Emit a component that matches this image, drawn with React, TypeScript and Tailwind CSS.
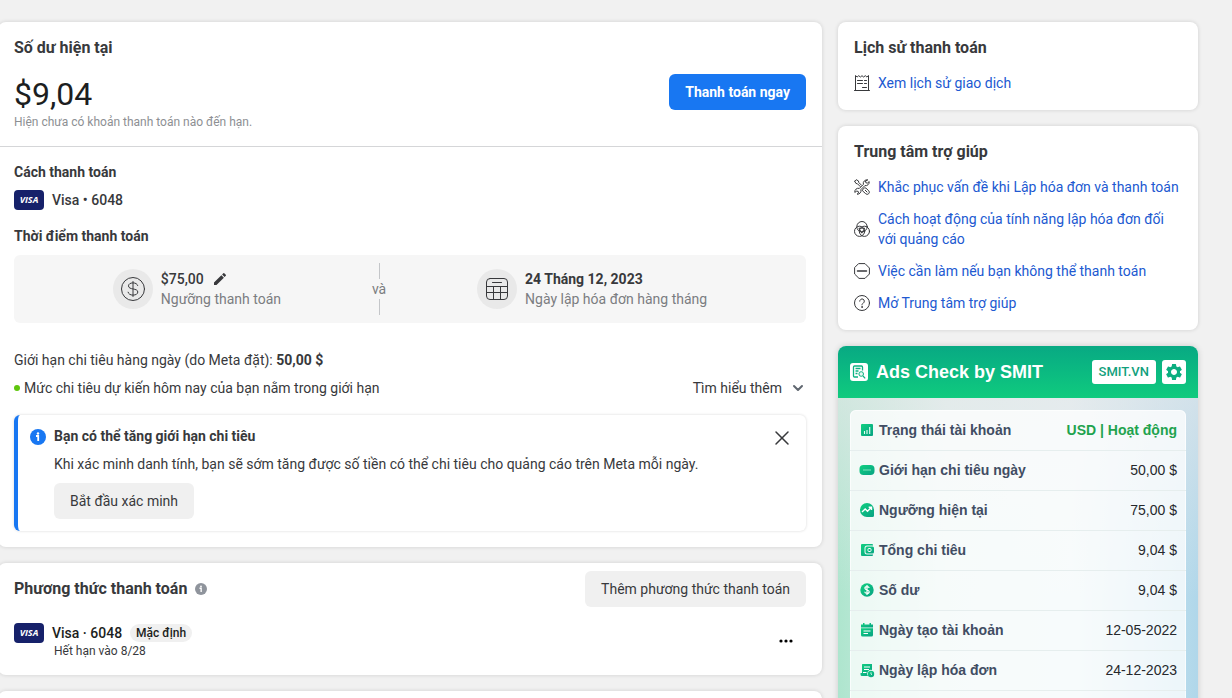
import type { ReactNode } from 'react';
import { ChevronDown, X } from 'lucide-react';
import { MdEdit, MdSettings } from 'react-icons/md';

const iconStroke = { fill: 'none', stroke: 'currentColor', strokeLinecap: 'round', strokeLinejoin: 'round' } as const;

function ReceiptIcon() {
  return (
    <svg viewBox="0 0 16 16" className="w-4 h-4 shrink-0" {...iconStroke}>
      <path d="M1.5 15.500V.5l1.6 1.500L4.700.7l1.700 1.300L8 .7 9.600 2l1.700-1.300L12.900 2 14.500.5v15M.5 15.500h15M3.500 5.500h5M3.500 8.500h5M10.500 5.500h2M10.500 8.500h2M8.500 12.500h4" />
    </svg>
  );
}

function ToolsIcon() {
  return (
    <svg viewBox="0 0 16 16" className="w-4 h-4 shrink-0" {...iconStroke}>
      <path d="M.7 2.200 2.200.7l2.200 1.200.4 1.600 2.700 2.700M.7 2.200l1.200 2.200 1.600.4 2.700 2.700" />
      <path d="M13.400.8a3.600 3.600 0 0 0-4 4.600L5.400 9.400a3.600 3.600 0 0 0-4.600 4l1.900-1.300 1.500.3.300 1.500-1.400 1.300a3.600 3.600 0 0 0 3.800-4.600l4-4a3.600 3.600 0 0 0 4.300-4l-1.800 1.500-1.500-.3-.3-1.500z" />
      <path d="M8.700 10.700 10.600 8.700l1.400.5 2.700 2.500a2.100 2.100 0 0 1-3 3l-3-2.700zM11.300 11.300l1.700 1.700" />
    </svg>
  );
}

function CirclesIcon() {
  return (
    <svg viewBox="0 0 16 16" className="w-4 h-4 shrink-0" {...iconStroke}>
      <circle cx="8" cy="5.700" r="5.200" />
      <circle cx="5.600" cy="10.300" r="5.100" />
      <circle cx="10.400" cy="10.300" r="5.100" />
      <path d="M5.300 7.200h5.400L8 11.800z" />
    </svg>
  );
}

function StopIcon() {
  return (
    <svg viewBox="0 0 16 16" className="w-4 h-4 shrink-0" {...iconStroke}>
      <path d="M5 .6h6L15.400 5v6L11 15.400H5L.6 11V5z" />
      <path d="M3.500 8h9" strokeWidth="1.500" />
    </svg>
  );
}

function QuestionIcon() {
  return (
    <svg viewBox="0 0 16 16" className="w-4 h-4 shrink-0" {...iconStroke}>
      <circle cx="8" cy="8" r="7.500" />
      <path d="M5.700 6.200a2.300 2.300 0 1 1 3.600 1.900C8.400 8.600 8 9 8 9.900" />
      <circle cx="8" cy="12" r=".4" fill="currentColor" />
    </svg>
  );
}

function DollarIcon() {
  return (
    <svg viewBox="0 0 24 24" className="w-6 h-6" {...iconStroke}>
      <circle cx="12" cy="12" r="11.500" />
      <path d="M12 4.500v15M16.700 8.500C16.300 7 14.500 5.900 12 5.900c-2.700 0-4.500 1.200-4.500 3 0 4.300 9.300 1.900 9.300 6.100 0 1.900-1.900 3.100-4.800 3.100-2.700 0-4.500-1.100-4.900-2.900" />
    </svg>
  );
}

function CalendarIcon() {
  return (
    <svg viewBox="0 0 24 24" className="w-6 h-6" {...iconStroke}>
      <rect x="1.500" y="1.500" width="21" height="21" rx="3.500" />
      <path d="M1.500 9.500h21M1.500 15.500h21M8.500 9.500v13M15.500 9.500v13M7.500 5.500h9" />
    </svg>
  );
}

function InfoIcon({ className }: { className: string }) {
  return (
    <svg viewBox="0 0 16 16" className={className}>
      <circle cx="8" cy="8" r="8" fill="currentColor" />
      <circle cx="8" cy="4.500" r="1.200" fill="#fff" />
      <path d="M6 7h2.200v5" fill="none" stroke="#fff" strokeWidth="1.800" />
    </svg>
  );
}

function VisaBadge() {
  return (
    <span className="w-[30px] h-5 shrink-0 rounded-sm bg-[#16216a] text-white text-[9px] leading-5 font-bold italic text-center font-['Open_Sans',sans-serif]">
      VISA
    </span>
  );
}

function Card({ className = '', children }: { className?: string; children?: ReactNode }) {
  return (
    <section className={`bg-white rounded-lg shadow-[0_0_4px_rgba(0,0,0,0.14)] ${className}`}>{children}</section>
  );
}

const helpLinks = [
  { icon: ToolsIcon, label: 'Khắc phục vấn đề khi Lập hóa đơn và thanh toán' },
  { icon: CirclesIcon, label: 'Cách hoạt động của tính năng lập hóa đơn đối với quảng cáo' },
  { icon: StopIcon, label: 'Việc cần làm nếu bạn không thể thanh toán' },
  { icon: QuestionIcon, label: 'Mở Trung tâm trợ giúp' },
];

function SideLink({ icon: Icon, label }: { icon: () => ReactNode; label: string }) {
  return (
    <li className="flex items-center gap-2">
      <Icon />
      <a href="#" className="text-[#2159d1]">{label}</a>
    </li>
  );
}

// 16x16 glyphs for the account table, filled with the shared green gradient
const statGlyphs: Record<string, ReactNode> = {
  status: (
    <>
      <rect x="2" y="2" width="12" height="12" rx="1" fill="url(#green)" />
      <path d="M5.500 9v3M8 8v4M10.700 5V12" stroke="#e8fff5" strokeWidth="1.100" />
    </>
  ),
  limit: (
    <>
      <rect x=".5" y="3" width="15" height="10" rx="4" fill="url(#green)" />
      <path d="M4 8h8" stroke="#7fe3bb" />
    </>
  ),
  threshold: (
    <>
      <path d="M8 1a7 7 0 1 0 0 14h5.500a1.500 1.500 0 0 0 1.500-1.500V8a7 7 0 0 0-7-7z" fill="url(#green)" />
      <path d="m3 10 3.200-3 2.300 2.200 3.700-3.700M9.700 5.300h2.800v2.800" fill="none" stroke="#fff" strokeWidth="1.400" />
    </>
  ),
  spend: (
    <>
      <path d="M3 2h10a1 1 0 0 1 1 1v.5H8A2.500 2.500 0 0 0 5.500 6v4A2.500 2.500 0 0 0 8 12.500h6v.500a1 1 0 0 1-1 1H3a1 1 0 0 1-1-1V3a1 1 0 0 1 1-1z" fill="url(#green)" />
      <rect x="6.500" y="4.500" width="8.500" height="7" rx="1.500" fill="url(#green)" />
      <rect x="9" y="6.500" width="3" height="3" rx=".8" fill="none" stroke="#fff" />
    </>
  ),
  balance: (
    <>
      <circle cx="8" cy="8" r="6.700" fill="url(#green)" />
      <path d="M8 3v10M10.200 6C10 5 9.200 4.600 8 4.600S5.900 5.200 5.900 6.200C5.900 8.400 10.200 7.500 10.200 9.700c0 1-.9 1.700-2.200 1.700s-2.200-.6-2.300-1.600" fill="none" stroke="#fff" strokeWidth="1.200" />
    </>
  ),
  created: (
    <>
      <path d="M4 1h1.500v1.500h5V1H12v1.500h2V5.500H2v-3h2z" fill="url(#green)" />
      <path d="M2 6.300h12V13a1.500 1.500 0 0 1-1.500 1.500h-9A1.500 1.500 0 0 1 2 13z" fill="url(#green)" />
      <path d="M4.500 9h7M4.500 11.500h4.500" stroke="#fff" strokeWidth="1.100" />
    </>
  ),
  billing: (
    <>
      <path d="M3.500 2H13v6a3.800 3.800 0 0 0-4 6H3a1.500 1.500 0 0 1-1.500-1.500V11H3V2.500z" fill="url(#green)" />
      <path d="M5 5h6M5 7.500h5M4 10.500h3.500" stroke="#fff" />
      <circle cx="12" cy="12" r="3.200" fill="url(#green)" />
      <path d="M12 10.300V12l1 .8" fill="none" stroke="#fff" strokeWidth=".8" />
    </>
  ),
};

const accountStats = [
  { glyph: 'status', label: 'Trạng thái tài khoản', value: 'USD | Hoạt động', active: true },
  { glyph: 'limit', label: 'Giới hạn chi tiêu ngày', value: '50,00 $' },
  { glyph: 'threshold', label: 'Ngưỡng hiện tại', value: '75,00 $' },
  { glyph: 'spend', label: 'Tổng chi tiêu', value: '9,04 $' },
  { glyph: 'balance', label: 'Số dư', value: '9,04 $' },
  { glyph: 'created', label: 'Ngày tạo tài khoản', value: '12-05-2022' },
  { glyph: 'billing', label: 'Ngày lập hóa đơn', value: '24-12-2023' },
];

function AdsCheckPanel() {
  return (
    <section className="rounded-lg overflow-hidden shadow-[0_0_6px_rgba(0,0,0,0.16)] font-['Liberation_Sans',Arial,sans-serif]">
      <svg width="0" height="0" className="absolute" aria-hidden="true">
        <defs>
          <linearGradient id="green" x1="0" y1="0" x2="1" y2="1">
            <stop offset="0" stopColor="#10d080" />
            <stop offset="1" stopColor="#08a283" />
          </linearGradient>
        </defs>
      </svg>

      <header className="flex items-center h-[52px] px-3 bg-gradient-to-t from-[#10cb7e] to-[#08a983]">
        <svg viewBox="0 0 18 18" className="w-[18px] h-[18px] shrink-0">
          <rect width="18" height="18" rx="3" fill="#fff" />
          <path d="M12.500 7.500V4a1 1 0 0 0-1-1H4.500a1 1 0 0 0-1 1v9a1 1 0 0 0 1 1h3.500M5.500 5.500h5M5.500 8h3M5.500 10.500h2M7 14H5" fill="none" stroke="#0bb381" strokeWidth="1.300" />
          <circle cx="11.200" cy="11" r="2.300" fill="#e6f8f1" stroke="#0bb381" />
          <path d="m13 13 2.200 2.300" stroke="#0bb381" strokeWidth="1.200" />
        </svg>
        <h2 className="flex-1 ml-2 text-lg font-bold text-white">Ads Check by SMIT</h2>
        <a href="#" className="h-6 px-[7px] rounded-[3px] bg-white text-[#12a07c] text-[13px] leading-6 font-medium font-[Roboto,sans-serif]">
          SMIT.VN
        </a>
        <button type="button" aria-label="Cài đặt" className="w-6 h-6 ml-1.5 rounded-[3px] bg-white text-[#0bae80] flex items-center justify-center">
          <MdSettings className="w-5 h-5" />
        </button>
      </header>

      <div className="p-3 bg-[linear-gradient(to_bottom,rgba(232,232,234,0.6),transparent_200px),linear-gradient(to_right,#aee5ce,#dcefec_30%,#e0eff2_65%,#b0d7ea)]">
        <div className="rounded-md bg-white/75 shadow-[inset_0_0_0_1px_rgba(255,255,255,0.7)] pb-10">
          <table className="w-full text-sm">
            <tbody>
              {accountStats.map((item) => (
                <tr key={item.label} className="h-10 border-b border-[#e6eeee]">
                  <th scope="row" className="pl-[9px] text-left font-bold text-[#414d63]">
                    <span className="flex items-center gap-1">
                      <svg viewBox="0 0 16 16" className="w-4 h-4 shrink-0">{statGlyphs[item.glyph]}</svg>
                      {item.label}
                    </span>
                  </th>
                  <td className={`pr-[9px] text-right ${item.active ? 'font-bold text-[#1fa34e]' : 'text-[#26282c]'}`}>
                    {item.value}
                  </td>
                </tr>
              ))}
            </tbody>
          </table>
        </div>
      </div>
    </section>
  );
}

export default function App() {
  return (
    <div className="h-screen overflow-hidden bg-[#f1f1f1] pt-[22px] pr-[34px] flex items-start gap-4 font-[Roboto,sans-serif] text-sm leading-5 text-[#38393c]">
      <main className="flex-1 min-w-0 -ml-0.5 space-y-4">
        <Card>
          <div className="p-4 border-b border-[#d5d6d8]">
            <h2 className="text-base leading-5 font-bold">Số dư hiện tại</h2>
            <div className="flex items-start justify-between mt-4">
              <div>
                <p className="text-[32px] leading-10 text-[#1c1e21]">$9,04</p>
                <p className="text-xs leading-4 text-[#8d8f93]">Hiện chưa có khoản thanh toán nào đến hạn.</p>
              </div>
              <button type="button" className="h-9 px-4 rounded-md bg-[#1877f2] text-white font-bold">
                Thanh toán ngay
              </button>
            </div>
          </div>

          <div className="px-4 pt-[15px] pb-4">
            <h3 className="font-bold">Cách thanh toán</h3>
            <div className="flex items-center gap-2 mt-2 font-medium">
              <VisaBadge />
              Visa • 6048
            </div>
            <h3 className="mt-4 font-bold">Thời điểm thanh toán</h3>

            <div className="flex items-center justify-evenly h-[68px] px-2 mt-[9px] rounded-md bg-[#f6f6f6]">
              <div className="flex items-center gap-2">
                <span className="w-10 h-10 rounded-full bg-[#e9e9e9] flex items-center justify-center">
                  <DollarIcon />
                </span>
                <div>
                  <div className="flex items-center gap-2 font-medium">
                    $75,00
                    <button type="button" aria-label="Chỉnh sửa">
                      <MdEdit className="w-4 h-4" />
                    </button>
                  </div>
                  <p className="text-[#7b7d81]">Ngưỡng thanh toán</p>
                </div>
              </div>
              <div className="flex flex-col items-center text-[#7b7d81]">
                <span className="w-px h-4 bg-[#c4c6c9]" />
                <span>và</span>
                <span className="w-px h-4 bg-[#c4c6c9]" />
              </div>
              <div className="flex items-center gap-2">
                <span className="w-10 h-10 rounded-full bg-[#e9e9e9] flex items-center justify-center">
                  <CalendarIcon />
                </span>
                <div>
                  <p className="font-bold">24 Tháng 12, 2023</p>
                  <p className="text-[#7b7d81]">Ngày lập hóa đơn hàng tháng</p>
                </div>
              </div>
            </div>

            <p className="mt-[27px]">
              Giới hạn chi tiêu hàng ngày (do Meta đặt): <b className="font-bold">50,00 $</b>
            </p>
            <div className="flex items-center mt-2">
              <span className="w-1.5 h-1.5 mr-1 rounded-full bg-[#5fc60d]" />
              <p className="flex-1">Mức chi tiêu dự kiến hôm nay của bạn nằm trong giới hạn</p>
              <button type="button" className="flex items-center gap-2">
                Tìm hiểu thêm
                <ChevronDown className="w-4 h-4 text-[#606770]" strokeWidth={3} />
              </button>
            </div>

            <div className="flex items-start mt-[17px] px-3 pt-[11px] pb-3 rounded-md border-l-4 border-[#1877f2] shadow-[0_0_3px_rgba(0,0,0,0.16)]">
              <InfoIcon className="w-4 h-4 mt-[3px] shrink-0 text-[#1877f2]" />
              <div className="flex-1 ml-2">
                <h3 className="font-bold">Bạn có thể tăng giới hạn chi tiêu</h3>
                <p className="mt-2">Khi xác minh danh tính, bạn sẽ sớm tăng được số tiền có thể chi tiêu cho quảng cáo trên Meta mỗi ngày.</p>
                <button type="button" className="h-9 px-4 mt-[9px] rounded-md bg-[#f0f0f0]">Bắt đầu xác minh</button>
              </div>
              <button type="button" aria-label="Đóng">
                <X className="w-6 h-6" strokeWidth={1.500} />
              </button>
            </div>
          </div>
        </Card>

        <Card className="px-4 pt-2 pb-4">
          <div className="flex items-center gap-2">
            <h2 className="text-base leading-5 font-bold">Phương thức thanh toán</h2>
            <InfoIcon className="w-3 h-3 text-[#8f949c]" />
            <button type="button" className="h-9 px-4 ml-auto rounded-md bg-[#f0f0f0]">Thêm phương thức thanh toán</button>
          </div>
          <div className="flex items-center mt-4">
            <div className="flex-1 flex items-start gap-2">
              <VisaBadge />
              <div>
                <div className="flex items-center gap-2 font-medium text-[#1c1e21]">
                  Visa · 6048
                  <span className="px-1.5 rounded-full bg-[#f0f0f0] text-xs leading-[18px]">Mặc định</span>
                </div>
                <p className="ml-0.5 text-xs leading-4">Hết hạn vào 8/28</p>
              </div>
            </div>
            <button type="button" aria-label="Tùy chọn khác" className="mr-3">
              <svg viewBox="0 0 16 16" className="w-4 h-4">
                <circle cx="3" cy="8" r="1.600" />
                <circle cx="8" cy="8" r="1.600" />
                <circle cx="13" cy="8" r="1.600" />
              </svg>
            </button>
          </div>
        </Card>

        <Card className="h-16" />
      </main>

      <aside className="w-[360px] shrink-0 space-y-4">
        <Card className="px-4 pt-4 pb-[17px]">
          <h2 className="text-base leading-5 font-bold">Lịch sử thanh toán</h2>
          <ul className="mt-[15px]">
            <SideLink icon={ReceiptIcon} label="Xem lịch sử giao dịch" />
          </ul>
        </Card>

        <Card className="px-4 pt-4 pb-[17px]">
          <h2 className="text-base leading-5 font-bold">Trung tâm trợ giúp</h2>
          <ul className="mt-[15px] space-y-3">
            {helpLinks.map((item) => (
              <SideLink key={item.label} icon={item.icon} label={item.label} />
            ))}
          </ul>
        </Card>

        <AdsCheckPanel />
      </aside>
    </div>
  );
}
